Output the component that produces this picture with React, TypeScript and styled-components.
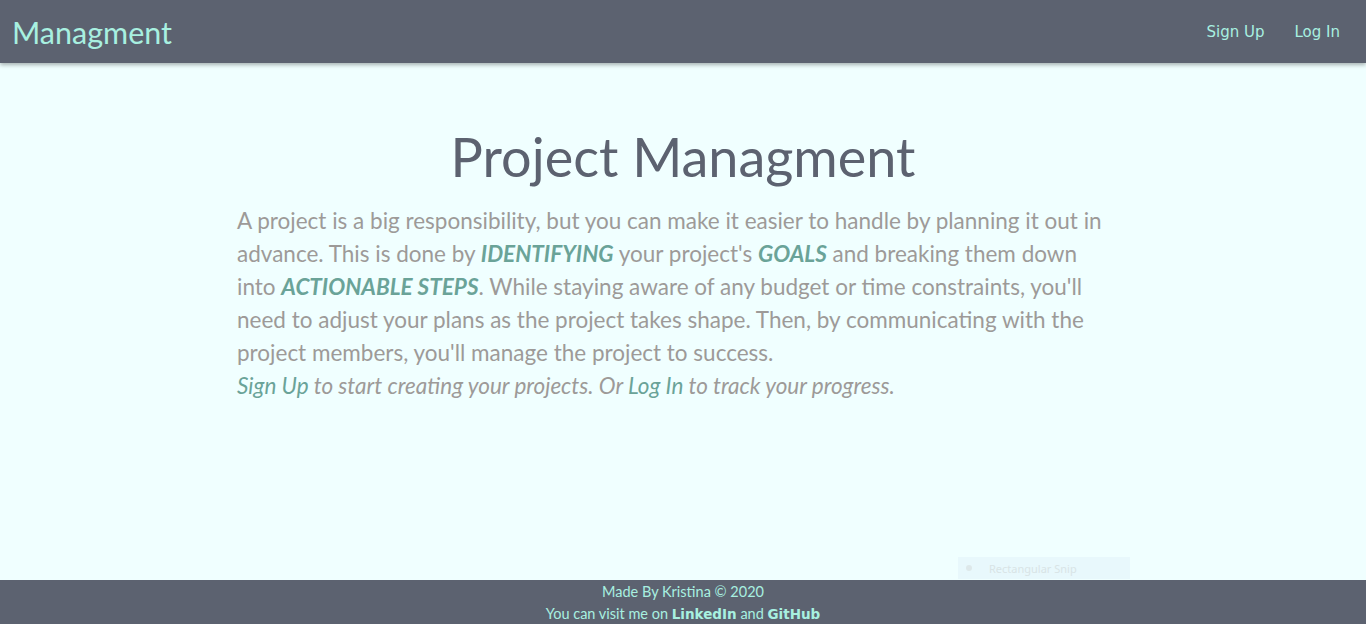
import React from 'react';
import styled, { createGlobalStyle } from 'styled-components';

const GlobalStyle = createGlobalStyle`
  html, body {
    margin: 0;
    padding: 0;
    height: 100%;
  }
  body {
    background: #f0ffff;
    font-family: Lato, 'Noto Sans', sans-serif;
  }
  #root {
    min-height: 100vh;
    display: flex;
    flex-direction: column;
  }
`;

const NavBar = styled.nav`
  height: 63px;
  background: #5c6270;
  display: flex;
  align-items: center;
  justify-content: space-between;
  padding: 0 12px;
  box-shadow: 0 2px 4px rgba(0, 0, 0, 0.3);
  position: relative;
  z-index: 1;
`;

const Logo = styled.a`
  font-family: Lato, sans-serif;
  font-size: 30.5px;
  color: #a8f0e0;
  text-decoration: none;
`;

const NavLinks = styled.div`
  display: flex;
  gap: 30px;
  padding-right: 14px;
`;

const NavLink = styled.a`
  font-family: 'DejaVu Sans', Verdana, sans-serif;
  font-size: 15px;
  color: #a8f0e0;
  text-decoration: none;
`;

const Main = styled.main`
  flex: 1;
  display: flex;
  flex-direction: column;
  align-items: center;
  padding-top: 61px;
  position: relative;
`;

const Title = styled.h1`
  margin: 0;
  font-family: Lato, sans-serif;
  font-weight: 400;
  font-size: 54px;
  line-height: 66px;
  color: #5c6270;
`;

const Text = styled.p`
  width: 880px;
  margin: 14px 0 0;
  padding-right: 12px;
  font-size: 22.5px;
  line-height: 33px;
  color: #9d9a98;
`;

const Em = styled.strong`
  font-style: italic;
  font-weight: 700;
  color: #6aa398;
`;

const Italic = styled.span`
  font-style: italic;
`;

const InlineLink = styled.a`
  color: #6aa398;
  text-decoration: none;
`;

const Snip = styled.div`
  position: absolute;
  right: 236px;
  bottom: 1px;
  width: 172px;
  height: 22px;
  background: #e8f8fc;
  display: flex;
  align-items: center;
  gap: 17px;
  padding-left: 8px;
  box-sizing: border-box;
  font-family: 'Noto Sans', sans-serif;
  font-size: 11px;
  color: #d8e4e6;

  &::before {
    content: '';
    width: 6px;
    height: 6px;
    border-radius: 50%;
    background: #dde8ea;
  }
`;

const Footer = styled.footer`
  height: 44px;
  background: #5c6270;
  color: #a8f0e0;
  text-align: center;
  font-family: Lato, sans-serif;
  font-size: 14.5px;
  line-height: 22px;
  padding-top: 1px;
  box-sizing: border-box;
`;

const FooterLink = styled.a`
  font-family: 'DejaVu Sans', Verdana, sans-serif;
  font-weight: 700;
  font-size: 13.5px;
  color: #a8f0e0;
  text-decoration: none;
`;

const App = () => {
  return (
    <>
      <GlobalStyle />
      <NavBar>
        <Logo href='#'>Managment</Logo>
        <NavLinks>
          <NavLink href='#'>Sign Up</NavLink>
          <NavLink href='#'>Log In</NavLink>
        </NavLinks>
      </NavBar>
      <Main>
        <Title>Project Managment</Title>
        <Text>
          A project is a big responsibility, but you can make it easier to
          handle by planning it out in advance. This is done by{' '}
          <Em>IDENTIFYING</Em> your project's <Em>GOALS</Em> and breaking them
          down into <Em>ACTIONABLE STEPS</Em>. While staying aware of any budget
          or time constraints, you'll need to adjust your plans as the project
          takes shape. Then, by communicating with the project members, you'll
          manage the project to success.
          <br />
          <Italic>
            <InlineLink href='#'>Sign Up</InlineLink> to start creating your
            projects. Or <InlineLink href='#'>Log In</InlineLink> to track your
            progress.
          </Italic>
        </Text>
        <Snip>Rectangular Snip</Snip>
      </Main>
      <Footer>
        <div>Made By Kristina © 2020</div>
        <div>
          You can visit me on <FooterLink href='#'>LinkedIn</FooterLink> and{' '}
          <FooterLink href='#'>GitHub</FooterLink>
        </div>
      </Footer>
    </>
  );
};

export default App;
